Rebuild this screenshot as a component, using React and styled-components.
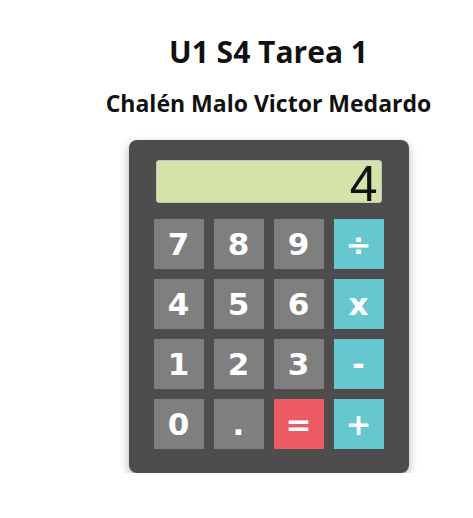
import React from "react";
import styled, { createGlobalStyle } from "styled-components";

const GlobalStyle = createGlobalStyle`
  html, body {
    margin: 0;
    padding: 0;
    background: #fff;
    overflow: hidden;
  }
`;

const keys = [
  ["7", "num"], ["8", "num"], ["9", "num"], ["÷", "op"],
  ["4", "num"], ["5", "num"], ["6", "num"], ["x", "op"],
  ["1", "num"], ["2", "num"], ["3", "num"], ["-", "op"],
  ["0", "num"], [".", "num"], ["=", "eq"], ["+", "op"],
];

const colors = {
  num: "#7f7f7f",
  op: "#66c7cf",
  eq: "#ed5c65",
};

export default function App() {
  return (
    <Page>
      <GlobalStyle />
      <Title>U1 S4 Tarea 1</Title>
      <Subtitle>Chalén Malo Victor Medardo</Subtitle>
      <Calculator>
        <Display>4</Display>
        <Keys>
          {keys.map(([label, kind]) => (
            <Key key={label} kind={kind}>
              {label}
            </Key>
          ))}
        </Keys>
      </Calculator>
    </Page>
  );
}

const Page = styled.div`
  box-sizing: border-box;
  width: 473px;
  padding-left: 64px;
  display: flex;
  flex-direction: column;
  align-items: center;
  font-family: "Open Sans", "DejaVu Sans", sans-serif;
  color: #111;
`;

const Title = styled.h1`
  margin: 32px 0 0;
  font-size: 30px;
  line-height: 40px;
  font-weight: 700;
`;

const Subtitle = styled.h2`
  margin: 16px 0 0;
  font-size: 23px;
  line-height: 30px;
  font-weight: 700;
`;

const Calculator = styled.div`
  box-sizing: border-box;
  margin-top: 22px;
  width: 280px;
  padding: 20px 25px 24px;
  background: #4d4d4d;
  border-radius: 8px;
  box-shadow: 0 4px 10px rgba(0, 0, 0, 0.3);
`;

const Display = styled.div`
  box-sizing: border-box;
  margin: 0 2px 16px;
  height: 43px;
  padding-right: 3px;
  background: #d4e4a8;
  border: 1px solid #c4c4c4;
  border-radius: 3px;
  text-align: right;
  font-family: "Liberation Sans", Arial, sans-serif;
  font-size: 50px;
  line-height: 47px;
  color: #111;
`;

const Keys = styled.div`
  display: grid;
  grid-template-columns: repeat(4, 50px);
  grid-auto-rows: 50px;
  gap: 10px;
`;

const Key = styled.div`
  display: flex;
  align-items: center;
  justify-content: center;
  background: ${(p) => colors[p.kind]};
  color: #fff;
  font-family: "DejaVu Sans", sans-serif;
  font-weight: 700;
  font-size: 31px;
`;
